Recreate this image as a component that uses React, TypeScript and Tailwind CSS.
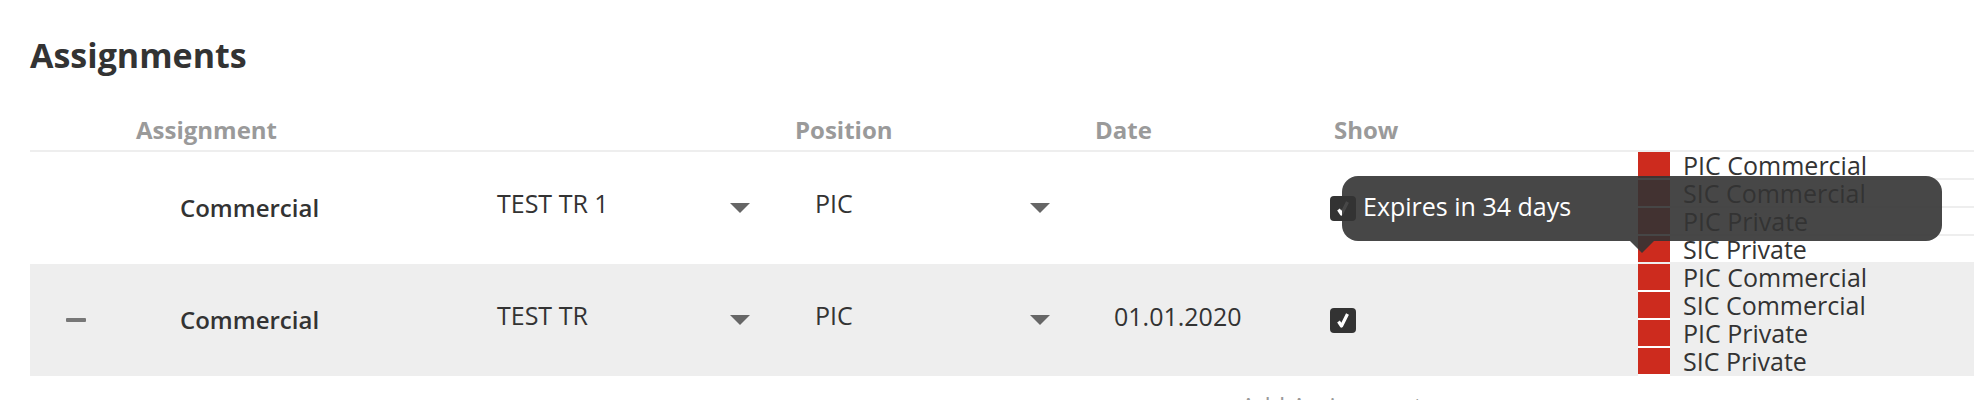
import React from 'react'

type Row = {
  removable: boolean
  type: string
  rating: string
  position: string
  date: string
  tooltip?: string
}

const ROWS: Row[] = [
  { removable: false, type: 'Commercial', rating: 'TEST TR 1', position: 'PIC', date: '', tooltip: 'Expires in 34 days' },
  { removable: true, type: 'Commercial', rating: 'TEST TR', position: 'PIC', date: '01.01.2020' },
]

const QUALIS = ['PIC Commercial', 'SIC Commercial', 'PIC Private', 'SIC Private']

function Caret() {
  return (
    <svg width="20" height="10" viewBox="0 0 20 10" className="shrink-0">
      <polygon points="0,0 20,0 10,10" fill="#666" />
    </svg>
  )
}

function Checkbox() {
  return (
    <div className="w-[26px] h-[25px] rounded-[4px] bg-[#333] flex items-center justify-center">
      <svg width="14" height="16" viewBox="0 0 14 16">
        <path d="M2.5 9.5 L5.5 14 L11.5 2" stroke="#fff" strokeWidth="3.2" fill="none" strokeLinejoin="round" />
      </svg>
    </div>
  )
}

export default function App() {
  return (
    <div className="w-full h-[400px] overflow-hidden bg-white text-[#333] font-['Open_Sans','Noto_Sans',sans-serif]">
      <div className="pl-[30px] pt-[35px]">
        <h1 className="h-[40px] leading-[40px] text-[34px] font-bold text-[#333]">Assignments</h1>

        {/* head */}
        <div className="mt-[37px] h-[40px] border-b-2 border-[#eee] flex text-[24px] leading-[36px] font-bold text-[#9a9a9a]">
          <div className="w-[106px]" />
          <div className="w-[659px]">Assignment</div>
          <div className="w-[300px]">Position</div>
          <div className="w-[239px]">Date</div>
          <div>Show</div>
        </div>

        {ROWS.map((r, i) => (
          <div key={i} className={`relative flex items-center h-[112px] ${i % 2 === 1 ? 'bg-[#eee]' : ''}`}>
            <div className="w-[150px] pl-[36px] flex items-center">
              {r.removable && <div className="w-[20px] h-[4px] rounded-[1px] bg-[#777]" />}
            </div>
            <div className="w-[317px] text-[24px] font-semibold">{r.type}</div>
            <div className="w-[318px] flex items-center">
              <span className="w-[233px] text-[25px] mb-[8px]">{r.rating}</span>
              <Caret />
            </div>
            <div className="w-[299px] flex items-center">
              <span className="w-[215px] text-[25px] mb-[8px]">{r.position}</span>
              <Caret />
            </div>
            <div className="w-[216px] text-[25px] mb-[6px]">{r.date}</div>
            <div className="w-[308px] flex items-center">
              <Checkbox />
            </div>
            <div className="flex-1 self-stretch flex flex-col">
              {QUALIS.map(q => (
                <div
                  key={q}
                  className={`h-[28px] flex items-stretch border-b-2 ${i % 2 === 1 ? 'border-transparent' : 'border-[#eee]'}`}
                >
                  <div className={`w-[32px] bg-[#cd2b1e] ${i % 2 === 1 ? 'shadow-[0_2px_0_#fff]' : ''}`} />
                  <span className="ml-[13px] text-[25px] leading-[26px]">{q}</span>
                </div>
              ))}
            </div>

            {r.tooltip && (
              <div className="absolute left-[1312px] top-[24px] w-[600px] h-[65px] rounded-[16px] bg-[rgba(51,51,51,0.9)] flex items-center pl-[21px] pb-[4px] text-white text-[25px]">
                {r.tooltip}
                <div className="absolute left-[288px] top-full w-0 h-0 border-l-[12px] border-r-[12px] border-t-[12px] border-l-transparent border-r-transparent border-t-[rgba(51,51,51,0.9)]" />
              </div>
            )}
          </div>
        ))}

        <div className="mt-[14px] pl-[1183px] flex items-center gap-[14px] text-[24px] leading-[32px] text-[#999]">
          <span>+</span>
          <span>Add Assignment</span>
        </div>
      </div>
    </div>
  )
}
